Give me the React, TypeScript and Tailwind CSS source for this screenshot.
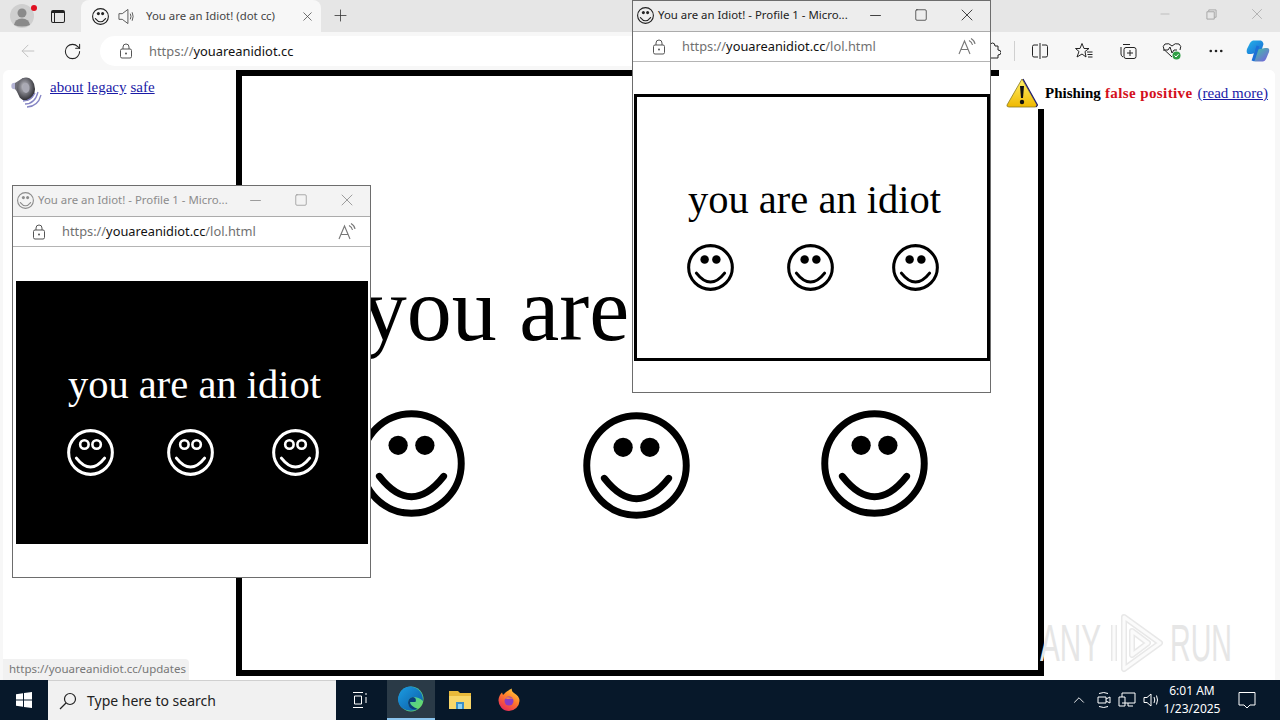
import { ArrowLeft, Minus, Plus, RotateCw, Square, X, ChevronUp } from 'lucide-react';

function Smiley({ className, dark }: { className: string; dark?: boolean }) {
  return (
    <svg viewBox="0 0 100 100" className={className} fill="none" stroke="currentColor" strokeWidth="6.5">
      <circle cx="50" cy="50" r="46.5" />
      {dark ? (
        <>
          <circle cx="37" cy="33" r="9" strokeWidth="5.5" />
          <circle cx="63" cy="33" r="9" strokeWidth="5.5" />
        </>
      ) : (
        <>
          <circle cx="37.5" cy="33" r="9" fill="currentColor" stroke="none" />
          <circle cx="62.5" cy="33" r="9" fill="currentColor" stroke="none" />
        </>
      )}
      <path d="M20 62 Q50 100 80 62" strokeLinecap="round" />
    </svg>
  );
}

function LockIcon() {
  return (
    <svg viewBox="0 0 14 16" className="h-[16px] w-[14px]" fill="none" stroke="#555555" strokeWidth="1">
      <rect x="1.500" y="6" width="11" height="9" rx="1.500" />
      <path d="M4 6 V4 Q4 1 7 1 Q10 1 10 4 V6" />
      <circle cx="7" cy="10.500" r="1" fill="#555555" stroke="none" />
    </svg>
  );
}

function ReadAloud() {
  return (
    <svg viewBox="0 0 18 18" className="h-[18px] w-[18px]" fill="none" stroke="#777777" strokeWidth="1.100">
      <path d="M1 16 L6.5 3 L12 16 M3 11.5 H10" />
      <path d="M11 2.5 Q14 4 14.5 7 M13 0.5 Q16.5 2.5 17 6" />
    </svg>
  );
}

function Popup({ dark, className }: { dark?: boolean; className: string }) {
  return (
    <div className={`absolute z-20 flex h-[393px] w-[359px] flex-col border border-[#6d6d6d] bg-white ${className}`}>
      <div className={`flex h-[31px] items-center border-b border-[#ababab] pb-[2px] pl-[4px] text-[11.400px] ${dark ? 'bg-[#f3f3f3] text-[#8c8c8c]' : 'bg-[#ededed] text-[#222222]'}`}>
        <Smiley className={`h-[17px] w-[17px] ${dark ? 'text-[#8c8c8c]' : 'text-[#222222]'}`} />
        <span className="ml-[4px] w-[190px] whitespace-nowrap">You are an Idiot! - Profile 1 - Micro...</span>
        <Minus className="ml-[19px] h-[17px] w-[17px]" strokeWidth={1.200} />
        <Square className="ml-[30px] h-[14px] w-[14px]" strokeWidth={1.200} />
        <X className="ml-[29px] h-[20px] w-[20px]" strokeWidth={1} />
      </div>
      <div className="flex h-[30px] items-center border-b border-[#b4b4b4] bg-white pl-[19px] text-[12.800px]">
        <LockIcon />
        <span className="ml-[16px] w-[276px] whitespace-nowrap text-[#707070]">
          https://<span className="text-[#111111]">youareanidiot.cc</span>/lol.html
        </span>
        <ReadAloud />
      </div>
      {dark ? (
        <div className="mt-[34px] ml-[3px] h-[263px] w-[352px] bg-black pt-[81px] text-white">
          <p className="pl-[5px] text-center font-['Liberation_Serif',serif] text-[40.5px] leading-[46px]">you are an idiot</p>
          <div className="mt-[21px] flex pl-[51px]">
            <Smiley dark className="h-[47px] w-[47px]" />
            <Smiley dark className="ml-[53px] h-[47px] w-[47px]" />
            <Smiley dark className="ml-[58px] h-[47px] w-[47px]" />
          </div>
        </div>
      ) : (
        <div className="mt-[32px] ml-[1px] h-[267px] w-[356px] border-[3px] border-black bg-white pt-[80px] text-black">
          <p className="pl-[5px] text-center font-['Liberation_Serif',serif] text-[40.5px] leading-[46px]">you are an idiot</p>
          <div className="mt-[21px] flex pl-[50px]">
            <Smiley className="h-[47px] w-[47px]" />
            <Smiley className="ml-[53px] h-[47px] w-[47px]" />
            <Smiley className="ml-[58px] h-[47px] w-[47px]" />
          </div>
        </div>
      )}
    </div>
  );
}

function SpeakerLogo() {
  return (
    <svg viewBox="0 0 32 32" className="h-[32px] w-[32px] shrink-0">
      <defs>
        <radialGradient id="cone" cx="42%" cy="40%" r="65%">
          <stop offset="0%" stopColor="#d8d8de" />
          <stop offset="35%" stopColor="#8a8a92" />
          <stop offset="75%" stopColor="#4a4a50" />
          <stop offset="100%" stopColor="#1f1f24" />
        </radialGradient>
      </defs>
      <circle cx="3.5" cy="9" r="3.200" fill="#b4b4d6" />
      <path d="M4 6 L12 1 H14 V23 H12 L4 12Z" fill="#6e6e78" />
      <ellipse cx="15" cy="12" rx="9" ry="11.500" fill="url(#cone)" />
      <ellipse cx="15" cy="11" rx="3.500" ry="5" fill="#a9a9b4" />
      <path d="M14 27 Q24 27 27 15 M16 30 Q27 29.500 30 18 M12 24 Q20 24 24 16" fill="none" stroke="#8585c4" strokeWidth="1.300" />
    </svg>
  );
}

function WarningSign() {
  return (
    <svg viewBox="0 0 32 30" className="h-[30px] w-[32px] shrink-0">
      <defs>
        <linearGradient id="warn" x1="0" y1="0" x2="0" y2="1">
          <stop offset="0%" stopColor="#fff06a" />
          <stop offset="100%" stopColor="#efb800" />
        </linearGradient>
      </defs>
      <path d="M16 1 L31 27 Q31.500 29 29 29 L3 29 Q0.500 29 1 27 Z" fill="url(#warn)" stroke="#8a7a20" strokeWidth="0.800" />
      <path d="M14 8 H18 L17 20 H15 Z" fill="#111111" />
      <circle cx="16" cy="24" r="2.200" fill="#111111" />
      <path d="M17 1 L31.500 27 L30 29" fill="none" stroke="#1f1a6b" strokeWidth="1.200" />
    </svg>
  );
}

function EdgeLogo() {
  return (
    <svg viewBox="0 0 26 26" className="h-[26px] w-[26px]">
      <defs>
        <linearGradient id="edgeA" x1="0" y1="0" x2="1" y2="1">
          <stop offset="0%" stopColor="#2fb6c8" />
          <stop offset="100%" stopColor="#6fe05f" />
        </linearGradient>
        <linearGradient id="edgeB" x1="0" y1="0" x2="1" y2="1">
          <stop offset="0%" stopColor="#1b9de2" />
          <stop offset="100%" stopColor="#0c59a4" />
        </linearGradient>
      </defs>
      <circle cx="13" cy="13" r="12.500" fill="url(#edgeA)" />
      <path d="M13 .5 A12.500 12.500 0 0 0 4 22 Q12 27 20 23 Q11 24 10 17 Q10 12 15 11 Q21 11 25 15 Q25 3 13 .5Z" fill="url(#edgeB)" />
      <path d="M10 17 Q10 12 15 11 Q19 12 17.500 16 L12 16 Q12 20 20 23 Q11 25 10 17Z" fill="#0a3f7c" />
    </svg>
  );
}

function ExplorerLogo() {
  return (
    <svg viewBox="0 0 24 22" className="h-[22px] w-[24px]">
      <path d="M1 2 H10 L12 4 H23 V20 H1 Z" fill="#e8b93a" />
      <path d="M1 7 H23 V20 H1 Z" fill="#f8d669" />
      <rect x="8" y="13" width="8" height="7" fill="#3b8fc9" />
      <rect x="10" y="15" width="4" height="5" fill="#8fd0ee" />
    </svg>
  );
}

function FirefoxLogo() {
  return (
    <svg viewBox="0 0 24 24" className="h-[24px] w-[24px]">
      <defs>
        <linearGradient id="fox" x1="0.8" y1="0" x2="0.200" y2="1">
          <stop offset="0%" stopColor="#ffd23c" />
          <stop offset="45%" stopColor="#ff7a2b" />
          <stop offset="100%" stopColor="#e5235d" />
        </linearGradient>
      </defs>
      <path d="M12 23 A10.500 10.500 0 0 1 1.500 12 Q2 7 5 4.500 L6 7 Q9 3 15 .5 Q14 3 17 5 Q22.500 8 22.500 13 A10.500 10.500 0 0 1 12 23Z" fill="url(#fox)" />
      <circle cx="12" cy="13" r="4.500" fill="#8a3bc4" />
      <path d="M7 10 Q12 8 17 11 Q14 10 11 11Z" fill="#ff8a3a" />
    </svg>
  );
}

function CopilotLogo() {
  return (
    <svg viewBox="0 0 24 24" className="h-[24px] w-[24px]">
      <defs>
        <linearGradient id="copA" x1="0" y1="0" x2="1" y2="1">
          <stop offset="0%" stopColor="#25b4e8" />
          <stop offset="100%" stopColor="#1867d4" />
        </linearGradient>
        <linearGradient id="copB" x1="0" y1="0" x2="1" y2="1">
          <stop offset="0%" stopColor="#3ecb9f" />
          <stop offset="100%" stopColor="#7b5be0" />
        </linearGradient>
      </defs>
      <path d="M7 1.500 H15 Q17 2 17.500 5 L15 13 L5 15 H2 Q0 14 1 10 L4 4 Q5 2 7 1.500Z" fill="url(#copA)" />
      <path d="M9 22.500 H17 Q19 22 20 20 L23 13 Q24 9 21 9 H19 L9 11 L7 19 Q7.500 22 9 22.500Z" fill="url(#copB)" />
      <path d="M7 22 L12 7" stroke="#1d6fd6" strokeWidth="3" />
    </svg>
  );
}

function ToolIcon({ children }: { children: React.ReactNode }) {
  return <div className="flex h-[20px] w-[44px] items-center justify-center text-[#222222]">{children}</div>;
}

function BrowserToolbar() {
  return (
    <div className="flex h-[36px] items-center bg-[#f7f7f7] pt-[2px] pl-[6px]">
      <div className="flex w-[44px] justify-center">
        <ArrowLeft className="h-[20px] w-[20px] text-[#c2c2c2]" strokeWidth={1.200} />
      </div>
      <div className="flex w-[44px] justify-center">
        <RotateCw className="h-[19px] w-[19px] text-[#222222]" strokeWidth={1.300} />
      </div>
      <div className="ml-[6px] flex h-[30px] w-[870px] items-center rounded-l-[15px] bg-white pl-[19px] text-[12.900px]">
        <LockIcon />
        <span className="mt-[1px] ml-[16px] text-[#707070]">
          https://<span className="text-[#111111]">youareanidiot.cc</span>
        </span>
      </div>
      <ToolIcon>
        <svg viewBox="0 0 18 18" className="h-[18px] w-[18px]" fill="none" stroke="currentColor" strokeWidth="1">
          <path d="M3 4 H7 Q7 1 9.500 1 Q12 1 12 4 H15 V8 Q18 8 18 10.500 Q18 13 15 13 V16 H3Z" />
        </svg>
      </ToolIcon>
      <div className="h-[20px] w-px bg-[#d0d0d0]" />
      <div className="w-[3px]" />
      <ToolIcon>
        <svg viewBox="0 0 18 18" className="h-[18px] w-[18px]" fill="none" stroke="currentColor" strokeWidth="1">
          <path d="M7 3 H3 Q1.500 3 1.500 4.500 V13.500 Q1.500 15 3 15 H7 M11 3 H15 Q16.500 3 16.500 4.500 V13.500 Q16.500 15 15 15 H11 M9 1 V17" />
        </svg>
      </ToolIcon>
      <ToolIcon>
        <svg viewBox="0 0 18 18" className="h-[18px] w-[18px]" fill="none" stroke="currentColor" strokeWidth="1">
          <path d="M7 1.500 L9 6.500 H14 L10 9.500 L11 15 L7 12 L2 15 L4 9.500 L0.500 6.500 H5Z" />
          <path d="M12 10 H17.500 M12.500 12.500 H17.500 M13 15 H17.500" />
        </svg>
      </ToolIcon>
      <ToolIcon>
        <svg viewBox="0 0 18 18" className="h-[18px] w-[18px]" fill="none" stroke="currentColor" strokeWidth="1">
          <path d="M4 2.500 H11 M2 5 V12 Q2 14 4 15" />
          <rect x="5" y="5.500" width="12" height="11" rx="2" />
          <path d="M11 8 V14 M8 11 H14" />
        </svg>
      </ToolIcon>
      <ToolIcon>
        <svg viewBox="0 0 20 18" className="h-[18px] w-[20px]" fill="none" stroke="currentColor" strokeWidth="1">
          <path d="M10 15 L2 7.500 Q0 4 3 2 Q7 .5 10 4 Q13 .5 17 2 Q20 4 18 8" />
          <path d="M1 8 H6 L8 5 L10 11 L12 8 H15" />
          <circle cx="14.500" cy="13.500" r="4" fill="#2f9e44" stroke="none" />
          <path d="M12.500 13.500 L14 15 L16.500 12.200" stroke="#ffffff" />
        </svg>
      </ToolIcon>
      <ToolIcon>
        <svg viewBox="0 0 16 4" className="h-[4px] w-[14px]" fill="currentColor">
          <circle cx="2" cy="2" r="1.500" />
          <circle cx="8" cy="2" r="1.500" />
          <circle cx="14" cy="2" r="1.500" />
        </svg>
      </ToolIcon>
      <div className="ml-[8px]">
        <CopilotLogo />
      </div>
    </div>
  );
}

function TabStrip() {
  return (
    <div className="flex h-[32px] items-end bg-[#e6e6e6] pl-[10px]">
      <div className="relative mb-[4px] flex h-[24px] w-[24px] items-center justify-center rounded-full bg-[#cfcfcf]">
        <svg viewBox="0 0 24 24" className="h-[24px] w-[24px]" fill="#8a8a8a">
          <circle cx="12" cy="9" r="4.500" />
          <path d="M4 21 Q5 14.500 12 14.500 Q19 14.500 20 21 Q12 24 4 21Z" />
        </svg>
        <span className="absolute top-[1px] right-[-3px] h-[6px] w-[6px] rounded-full bg-[#e01020]" />
      </div>
      <div className="mb-[9px] ml-[17px] h-[13px] w-[14px] rounded-[2px] border-[1.5px] border-t-[3px] border-[#222222]">
        <div className="h-full w-[3px] border-r border-[#222222]" />
      </div>
      <div className="ml-[16px] flex h-[32px] w-[240px] items-center rounded-t-[8px] bg-[#f7f7f7] pl-[11px] text-[11.400px] text-[#444444]">
        <Smiley className="h-[17px] w-[17px] text-[#222222]" />
        <svg viewBox="0 0 18 18" className="ml-[9px] h-[17px] w-[17px]" fill="none" stroke="#555555" strokeWidth="1">
          <path d="M1 6 H4.500 L10.500 1.500 V16.500 L4.500 12 H1Z M13 6 Q14.500 9 13 12 M15 4.500 Q17 9 15 13.500" />
        </svg>
        <span className="ml-[11px] w-[154px] whitespace-nowrap">You are an Idiot! (dot cc)</span>
        <X className="h-[15px] w-[15px] text-[#444444]" strokeWidth={1.200} />
      </div>
      <Plus className="mb-[7px] ml-[10px] h-[19px] w-[19px] text-[#333333]" strokeWidth={1} />
      <div className="mb-[9px] ml-auto flex w-[130px] items-center text-[#a3a3a3]">
        <Minus className="ml-[8px] h-[14px] w-[14px]" strokeWidth={1} />
        <svg viewBox="0 0 12 12" className="ml-[34px] h-[11px] w-[11px]" fill="none" stroke="currentColor">
          <path d="M3 2.500 V1 H11 V9 H9 M1 3 H9 V11 H1Z" />
        </svg>
        <X className="ml-[31px] h-[18px] w-[18px]" strokeWidth={1} />
      </div>
    </div>
  );
}

function Watermark() {
  return (
    <div className="pointer-events-none absolute right-[43px] bottom-[7px] z-10 flex h-[60px] w-[192px] items-center font-['Liberation_Sans',sans-serif] text-[52px] leading-none text-[#e6e6e6]">
      <span className="w-[62px] origin-left scale-x-[0.57] whitespace-nowrap">ANY</span>
      <svg viewBox="0 0 54 60" className="ml-[8px] h-[60px] w-[54px]" fill="none" strokeLinejoin="round">
        <path d="M4 12 V48 M14 4 L50 30 L14 56Z M22 18 L38 30 L22 42Z" stroke="#e8e8e8" strokeWidth="6" />
        <path d="M4 12 V48 M14 4 L50 30 L14 56Z M22 18 L38 30 L22 42Z" stroke="#fbfbfb" strokeWidth="3" />
      </svg>
      <span className="ml-[6px] w-[62px] origin-left scale-x-[0.55] whitespace-nowrap">RUN</span>
    </div>
  );
}

function PageContent() {
  return (
    <div className="relative mr-[5px] ml-[3px] h-[610px] rounded-t-[6px] bg-white font-['Liberation_Serif',serif] text-black">
      <div className="absolute top-[7px] left-[8px] flex text-[15px] text-[#1a1aa6]">
        <SpeakerLogo />
        <div className="mt-[-1px] ml-[7px] flex gap-[4px] underline">
          <span>about</span>
          <span>legacy</span>
          <span>safe</span>
        </div>
      </div>

      <div className="ml-[233px] h-[606px] w-[808px] border-[6px] border-black pt-[183px]">
        <p className="pl-[6px] text-center text-[90px] leading-[101px]">you are an idiot</p>
        <div className="mt-[50px] flex pl-[116px]">
          <Smiley className="h-[107px] w-[107px]" />
          <Smiley className="mt-[2px] ml-[118px] h-[107px] w-[107px]" />
          <Smiley className="ml-[131px] h-[107px] w-[107px]" />
        </div>
      </div>

      <div className="absolute top-0 right-0 flex h-[39px] w-[276px] items-center rounded-tr-[6px] bg-white pt-[7px] pl-[7px] text-[15px] whitespace-nowrap">
        <WarningSign />
        <span className="ml-[7px] font-bold">Phishing</span>
        <span className="ml-[4px] font-bold tracking-[0.4px] text-[#d40f1c]">false positive</span>
        <span className="ml-[5px] text-[#1a1aa6] underline">(read more)</span>
      </div>

      <Watermark />

      <div className="absolute bottom-0 left-0 h-[21px] w-[186px] rounded-tr-[4px] bg-[#f1f1f1] pl-[6px] font-['Noto_Sans',sans-serif] text-[11.500px] leading-[20px] whitespace-nowrap text-[#777777]">
        https://youareanidiot.cc/updates
      </div>
    </div>
  );
}

function Taskbar() {
  return (
    <div className="flex h-[40px] items-center bg-[#07182a] text-white">
      <div className="flex w-[48px] justify-center">
        <svg viewBox="0 0 16 16" className="h-[16px] w-[16px]" fill="#ffffff">
          <path d="M0 2.200 L7 1.200 V7.500 H0Z M8 1 L16 0 V7.500 H8Z M0 8.500 H7 V14.800 L0 13.800Z M8 8.500 H16 V16 L8 15Z" />
        </svg>
      </div>
      <div className="flex h-[40px] w-[288px] items-center border-t border-[#d0d0d0] bg-[#f1f1f1] pl-[11px] text-[14px] text-[#222222]">
        <svg viewBox="0 0 18 18" className="h-[18px] w-[18px]" fill="none" stroke="#222222" strokeWidth="1.200">
          <circle cx="11" cy="7" r="5.500" />
          <path d="M7 11 L1 17" />
        </svg>
        <span className="ml-[10px]">Type here to search</span>
      </div>
      <div className="ml-[15px] flex w-[18px] justify-center">
        <svg viewBox="0 0 16 16" className="h-[16px] w-[16px]" fill="none" stroke="#ffffff" strokeWidth="1">
          <path d="M1 .5 H11 M1 15.500 H11 M2.500 4 H9.500 V12 H2.500Z M14 1 V3 M14 5 V11" />
        </svg>
      </div>
      <div className="ml-[18px] flex h-[40px] w-[48px] items-center justify-center border-b-[2px] border-[#8ac4ee] bg-[#2a3a47]">
        <EdgeLogo />
      </div>
      <div className="ml-[13px] flex w-[24px] justify-center">
        <ExplorerLogo />
      </div>
      <div className="ml-[25px] flex w-[24px] justify-center">
        <FirefoxLogo />
      </div>
      <ChevronUp className="ml-[549px] h-[18px] w-[18px]" strokeWidth={1.200} />
      <svg viewBox="0 0 16 16" className="ml-[8px] h-[16px] w-[16px]" fill="none" stroke="#ffffff" strokeWidth="1">
        <path d="M3 1.500 Q8 -.5 12 1.500 M3 14.500 Q8 16.500 12 14.500 M2 5 H10 V11 H2Z M10 7 L14 5 V11 L10 9" />
      </svg>
      <svg viewBox="0 0 18 16" className="ml-[6px] h-[16px] w-[18px]" fill="none" stroke="#ffffff" strokeWidth="1">
        <path d="M4 5 V1 H17 V11 H4 M1 5 H7 V14 H1Z M10 11 V14 H15" />
      </svg>
      <svg viewBox="0 0 18 16" className="ml-[7px] h-[16px] w-[18px]" fill="none" stroke="#ffffff" strokeWidth="1">
        <path d="M1 5.500 H4 L8 2 V14 L4 10.500 H1Z M11 5 Q12.500 8 11 11 M13.500 3.500 Q15.500 8 13.500 12.500" />
      </svg>
      <div className="ml-[1px] w-[60px] text-center text-[12px] leading-[18px] whitespace-nowrap">
        <div>6:01 AM</div>
        <div>1/23/2025</div>
      </div>
      <svg viewBox="0 0 18 18" className="ml-[16px] h-[18px] w-[18px]" fill="none" stroke="#ffffff" strokeWidth="1">
        <path d="M1 1.500 H17 V14 H12 L9 17 L6 14 H1Z" />
      </svg>
    </div>
  );
}

export default function App() {
  return (
    <div className="relative flex h-[720px] w-[1280px] flex-col overflow-hidden bg-[#f7f7f7] font-['Noto_Sans',sans-serif]">
      <TabStrip />
      <BrowserToolbar />
      <div className="mt-[2px]">
        <PageContent />
      </div>
      <div className="mt-auto">
        <Taskbar />
      </div>
      <Popup dark className="top-[185px] left-[12px]" />
      <Popup className="top-0 left-[632px]" />
    </div>
  );
}
